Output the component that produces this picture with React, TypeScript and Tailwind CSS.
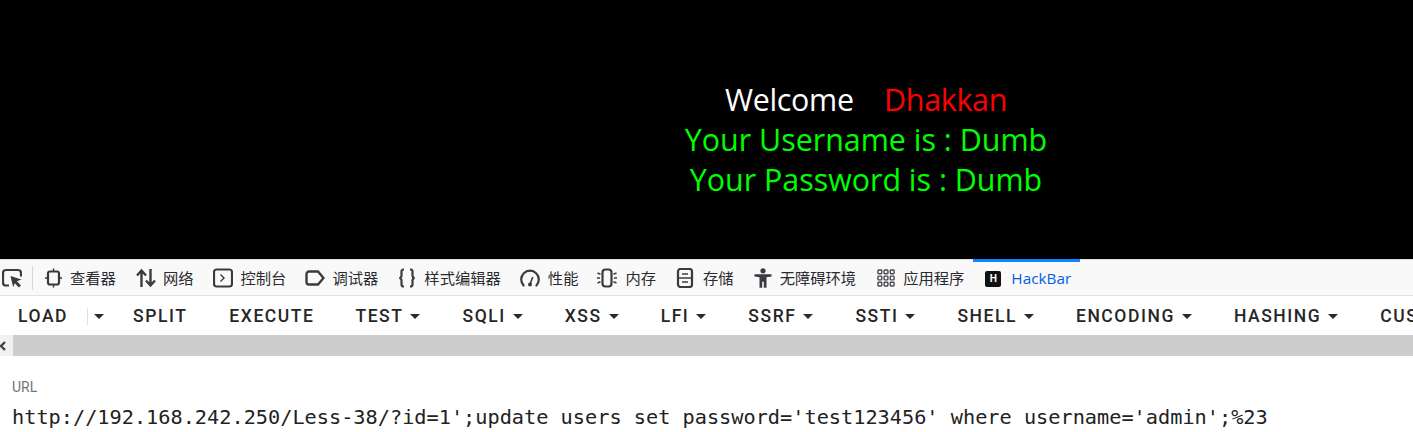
const tabs = [
  { label: "查看器", icon: <InspectorIcon />, w: "w-[17px]", ml: "ml-[12px]", gap: "ml-[8px]" },
  { label: "网络", icon: <NetworkIcon />, w: "w-[20px]", ml: "ml-[20px]", gap: "ml-[7px]" },
  { label: "控制台", icon: <ConsoleIcon />, w: "w-[20px]", ml: "ml-[19px]", gap: "ml-[8px]" },
  { label: "调试器", icon: <DebuggerIcon />, w: "w-[20px]", ml: "ml-[19px]", gap: "ml-[7px]" },
  { label: "样式编辑器", icon: <StyleIcon />, w: "w-[20px]", ml: "ml-[19px]", gap: "ml-[7px]" },
  { label: "性能", icon: <PerfIcon />, w: "w-[20px]", ml: "ml-[19px]", gap: "ml-[8px]" },
  { label: "内存", icon: <MemoryIcon />, w: "w-[20px]", ml: "ml-[19px]", gap: "ml-[8px]" },
  { label: "存储", icon: <StorageIcon />, w: "w-[18px]", ml: "ml-[20px]", gap: "ml-[9px]" },
  { label: "无障碍环境", icon: <AccessIcon />, w: "w-[18px]", ml: "ml-[20px]", gap: "ml-[8px]" },
  { label: "应用程序", icon: <AppIcon />, w: "w-[18px]", ml: "ml-[21px]", gap: "ml-[8px]" },
];

const buttons = [
  { label: "SPLIT", menu: false, ml: "ml-[29px]" },
  { label: "EXECUTE", menu: false, ml: "ml-[42px]" },
  { label: "TEST", menu: true, ml: "ml-[41px]" },
  { label: "SQLI", menu: true, ml: "ml-[42px]" },
  { label: "XSS", menu: true, ml: "ml-[42px]" },
  { label: "LFI", menu: true, ml: "ml-[42px]" },
  { label: "SSRF", menu: true, ml: "ml-[42px]" },
  { label: "SSTI", menu: true, ml: "ml-[42px]" },
  { label: "SHELL", menu: true, ml: "ml-[42px]" },
  { label: "ENCODING", menu: true, ml: "ml-[42px]" },
  { label: "HASHING", menu: true, ml: "ml-[42px]" },
  { label: "CUSTOM", menu: true, ml: "ml-[42px]" },
];

function InspectorIcon() {
  return (
    <svg viewBox="0 0 17 20" className="w-[17px] h-[20px]" fill="none" stroke="#3b3b3f" strokeWidth="2.2">
      <rect x="3" y="3.5" width="11" height="13" rx="2" />
      <path d="M0 10h3M14 10h3M8.5 0.5v3M8.5 16.5v3" strokeWidth="1.5" />
    </svg>
  );
}

function NetworkIcon() {
  return (
    <svg viewBox="0 0 20 20" className="w-[20px] h-[20px]" fill="none" stroke="#3b3b3f" strokeWidth="2.4">
      <path d="M5.5 19V3M1 7.5l4.5-5 4.5 5" />
      <path d="M14.5 1v16M10 12.5l4.5 5 4.5-5" />
    </svg>
  );
}

function ConsoleIcon() {
  return (
    <svg viewBox="0 0 20 20" className="w-[20px] h-[20px]" fill="none" stroke="#3b3b3f" strokeWidth="2.2">
      <rect x="1" y="1.5" width="18" height="17" rx="2.5" />
      <path d="M7.5 6.5l3.5 3.5-3.5 3.5" strokeWidth="1.4" />
    </svg>
  );
}

function DebuggerIcon() {
  return (
    <svg viewBox="0 0 20 20" className="w-[20px] h-[20px]" fill="none" stroke="#3b3b3f" strokeWidth="2.4">
      <path d="M4 3.5h9l5.5 6.5-5.5 6.5H4a2.5 2.5 0 0 1-2.5-2.5V6A2.5 2.5 0 0 1 4 3.5z" />
    </svg>
  );
}

function StyleIcon() {
  return (
    <svg viewBox="0 0 20 20" className="w-[20px] h-[20px]" fill="none" stroke="#3b3b3f" strokeWidth="2.2">
      <path d="M7 1.5H6.5a2 2 0 0 0-2 2v4c0 1.4-.8 2.2-2 2.5 1.2.3 2 1.1 2 2.5v4a2 2 0 0 0 2 2H7" />
      <path d="M13 1.5h.5a2 2 0 0 1 2 2v4c0 1.4.8 2.2 2 2.5-1.2.3-2 1.1-2 2.5v4a2 2 0 0 1-2 2H13" />
    </svg>
  );
}

function PerfIcon() {
  return (
    <svg viewBox="0 0 20 20" className="w-[20px] h-[20px]" fill="none" stroke="#3b3b3f" strokeWidth="2.2">
      <path d="M3.6 17.5A8.8 8.8 0 1 1 16.4 17.5" strokeLinecap="round" />
      <path d="M10 16.5l2.6-7" strokeWidth="1.6" strokeLinecap="round" />
      <circle cx="10" cy="16.5" r="2" fill="#3b3b3f" stroke="none" />
    </svg>
  );
}

function MemoryIcon() {
  return (
    <svg viewBox="0 0 20 20" className="w-[20px] h-[20px]" fill="none" stroke="#3b3b3f" strokeWidth="2.2">
      <rect x="5.5" y="1.5" width="9" height="17" rx="3" />
      <path d="M0.5 5l3 1.2M0 10h3M0.5 15l3-1.2M19.5 5l-3 1.2M20 10h-3M19.5 15l-3-1.2" strokeWidth="1.5" />
    </svg>
  );
}

function StorageIcon() {
  return (
    <svg viewBox="0 0 18 20" className="w-[18px] h-[20px]" fill="none" stroke="#3b3b3f" strokeWidth="2.2">
      <rect x="2" y="1" width="14" height="18" rx="2.5" />
      <path d="M6 6h6M2 10h14M6 14h6" strokeWidth="1.6" />
    </svg>
  );
}

function AccessIcon() {
  return (
    <svg viewBox="0 0 18 20" className="w-[18px] h-[20px]" fill="#3b3b3f">
      <circle cx="9" cy="2.8" r="2.6" />
      <path d="M0.5 6.2h17v2.4l-5 .7V19.8H9.8v-6h-1.6v6H5.5V9.3l-5-.7z" />
    </svg>
  );
}

function AppIcon() {
  const cells = [1, 7.5, 14];
  return (
    <svg viewBox="0 0 19 19" className="w-[18px] h-[18px]" fill="none" stroke="#4a4a4f" strokeWidth="1.5">
      {cells.map((y) =>
        cells.map((x) => <rect key={`${x}-${y}`} x={x} y={y} width="4" height="4" rx="0.8" />),
      )}
    </svg>
  );
}

function Caret() {
  return (
    <svg viewBox="0 0 10 5" className="w-[10px] h-[5px] flex-none" fill="#2b2b2b">
      <path d="M0 0h10L5 5z" />
    </svg>
  );
}

export default function App() {
  return (
    <div className="w-[1413px] h-[432px] overflow-hidden bg-white font-['Roboto',sans-serif]">
      {/* page under test */}
      <div className="h-[259px] bg-black flex flex-col items-center pt-[80px] pl-[319px] text-[30.4px] leading-[40px] font-['Open_Sans','Noto_Sans',sans-serif] text-[#00ff00]">
        <div className="text-white whitespace-pre tracking-[-0.3px]">
          Welcome{"    "}
          <span className="text-[#ff0000]">Dhakkan</span>
        </div>
        <div>Your Username is : Dumb</div>
        <div>Your Password is : Dumb</div>
      </div>

      {/* devtools tabs */}
      <div className="h-[37px] bg-[#f9f9fa] border-t border-b border-[#e0e0e2] flex items-center relative font-['Noto_Sans_CJK_SC','Noto_Sans',sans-serif] text-[15.3px] text-[#2b2b2f] whitespace-nowrap">
        <svg viewBox="0 0 20 20" className="w-[20px] h-[20px] ml-[2px] flex-none" fill="none" stroke="#3b3b3f" strokeWidth="2.2">
          <path d="M7 17.5H4a3 3 0 0 1-3-3V5a3 3 0 0 1 3-3h12a3 3 0 0 1 3 3v3.5" />
          <path d="M8.5 8l11 3.5-4.5 1.8 4 4.2-2.2 2-4-4.2-1.6 4z" fill="#3b3b3f" stroke="none" />
        </svg>
        <div className="w-px h-[24px] bg-[#d7d7db] ml-[10px]" />
        {tabs.map((t) => (
          <div key={t.label} className={`flex items-center flex-none ${t.ml}`}>
            <div className={`${t.w} flex-none flex items-center`}>{t.icon}</div>
            <span className={t.gap}>{t.label}</span>
          </div>
        ))}
        <div className="ml-[9px] w-[107px] h-[36px] flex items-center flex-none border-t-[3px] border-[#0a84ff] -mt-px pl-[12px] text-[#0060df]">
          <div className="w-[16px] h-[16px] bg-[#111] rounded-[2px] flex items-center justify-center text-white text-[10px] font-bold font-['Liberation_Sans',sans-serif]">
            H
          </div>
          <span className="ml-[10px] font-['Open_Sans',sans-serif] text-[15.3px]">HackBar</span>
        </div>
      </div>

      {/* hackbar toolbar */}
      <div className="h-[39px] flex items-center pl-[18px] pt-px whitespace-nowrap overflow-hidden text-[17.5px] font-medium tracking-[1.55px] text-[#262626]">
        <span className="flex-none">LOAD</span>
        <div className="w-px h-[17px] bg-[#e0e0e0] ml-[19px] flex-none" />
        <div className="ml-[6px] flex-none">
          <Caret />
        </div>
        {buttons.map((b) => (
          <div key={b.label} className={`flex items-center flex-none ${b.ml}`}>
            <span>{b.label}</span>
            {b.menu && (
              <div className="ml-[7px]">
                <Caret />
              </div>
            )}
          </div>
        ))}
      </div>

      {/* scrollbar */}
      <div className="h-[21px] bg-[#cdcdcd] flex">
        <div className="w-[13px] bg-[#f1f1f1] flex items-center">
          <svg viewBox="0 0 6 10" className="w-[6px] h-[10px]" fill="none" stroke="#444" strokeWidth="2.4">
            <path d="M5 1L1 5l4 4" />
          </svg>
        </div>
      </div>

      {/* url field */}
      <div className="pl-[12px] pt-[21px]">
        <div className="text-[14px] leading-[20px] text-[#757575]">URL</div>
        <div className="mt-[10px] text-[20.25px] leading-[20px] text-[#222] whitespace-nowrap font-['DejaVu_Sans_Mono',monospace]">
          http://192.168.242.250/Less-38/?id=1';update users set password='test123456' where username='admin';%23
        </div>
      </div>
    </div>
  );
}
